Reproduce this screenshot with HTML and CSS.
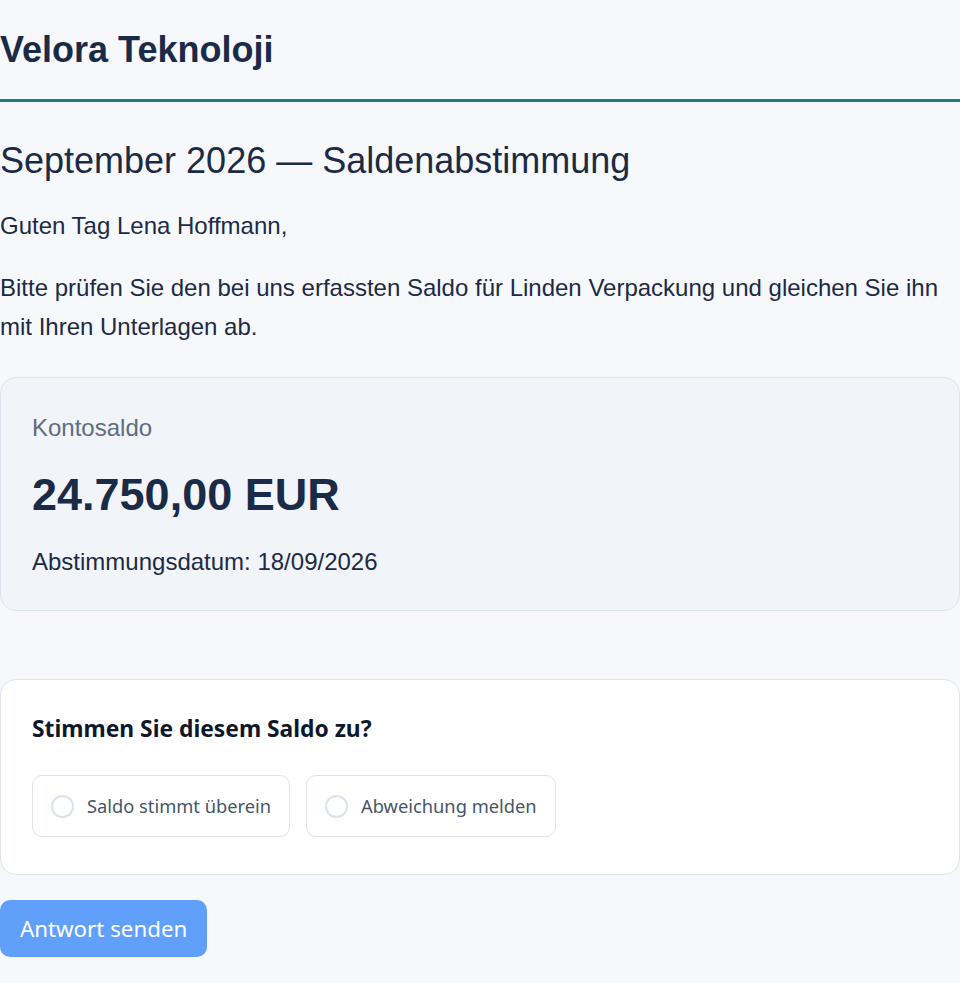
FILE: index.html
```html
<!DOCTYPE html>
<html lang="de">
<head>
<meta charset="utf-8">
<title>Saldenabstimmung</title>
<link rel="stylesheet" href="styles.css">
</head>
<body>
<header class="site-header">
  <h1 class="brand">Velora Teknoloji</h1>
</header>
<main class="content">
  <h2 class="title">September 2026 — Saldenabstimmung</h2>
  <p class="text">Guten Tag Lena Hoffmann,</p>
  <p class="text">Bitte prüfen Sie den bei uns erfassten Saldo für Linden Verpackung und gleichen Sie ihn mit Ihren Unterlagen ab.</p>

  <section class="balance-card">
    <div class="balance-label">Kontosaldo</div>
    <div class="balance-amount">24.750,00 EUR</div>
    <div class="balance-date">Abstimmungsdatum: 18/09/2026</div>
  </section>

  <form class="answer-card">
    <h3 class="question">Stimmen Sie diesem Saldo zu?</h3>
    <div class="options">
      <label class="option"><span class="radio"></span><span class="option-text">Saldo stimmt überein</span></label>
      <label class="option"><span class="radio"></span><span class="option-text">Abweichung melden</span></label>
    </div>
  </form>

  <button class="submit" type="button">Antwort senden</button>
</main>
</body>
</html>
```
FILE: styles.css
```css
* { box-sizing: border-box; }

html, body {
  margin: 0;
  padding: 0;
  background: #f7f8fc;
}

body {
  font-family: "Liberation Sans", Arial, sans-serif;
  color: #1c2b45;
}

.site-header {
  padding: 28px 0 28px;
  border-bottom: 3px solid #237d83;
}

.brand {
  margin: 0;
  font-size: 36px;
  line-height: 43px;
  font-weight: 700;
  color: #1a2b47;
}

.content {
  padding: 0;
}

.title {
  margin: 37px 0 25px;
  font-size: 36px;
  line-height: 43px;
  font-weight: 400;
  color: #1c2b45;
}

.text {
  margin: 0 0 24px;
  font-size: 24px;
  line-height: 38.4px;
  color: #1c2b45;
}

.balance-card {
  margin-top: 31px;
  background: #f1f4f9;
  border: 1px solid #dbe3ee;
  border-radius: 16px;
  padding: 32px 31px 30px;
  display: flex;
  flex-direction: column;
  gap: 22px;
}

.balance-label {
  font-size: 24px;
  line-height: 36px;
  color: #5d6c82;
}

.balance-amount {
  font-size: 45px;
  line-height: 54px;
  font-weight: 700;
  color: #1a2b47;
}

.balance-date {
  font-size: 24px;
  line-height: 36px;
  color: #1c2b45;
}

.answer-card {
  margin: 68px 0 0;
  background: #ffffff;
  border: 1px solid #dde4ef;
  border-radius: 16px;
  padding: 32px 31px 37px;
  font-family: "Noto Sans", "Open Sans", sans-serif;
}

.question {
  margin: 0 0 30px;
  font-size: 22.8px;
  line-height: 33px;
  font-weight: 700;
  color: #0f172a;
}

.options {
  display: flex;
  gap: 16px;
}

.option {
  display: flex;
  align-items: center;
  gap: 13px;
  padding: 16px 18px;
  border: 1px solid #dde4ef;
  border-radius: 10px;
  background: #ffffff;
}

.radio {
  width: 23px;
  height: 23px;
  border: 2px solid #dde3ec;
  border-radius: 50%;
  background: #ffffff;
  flex: none;
}

.option-text {
  font-size: 18.3px;
  line-height: 28px;
  color: #475569;
}

.submit {
  display: block;
  margin-top: 25px;
  padding: 12px 20px;
  border: 0;
  border-radius: 10px;
  background: #60a0fb;
  color: #ffffff;
  font-family: "Noto Sans", "Open Sans", sans-serif;
  font-size: 22.3px;
  line-height: 33px;
}
```
